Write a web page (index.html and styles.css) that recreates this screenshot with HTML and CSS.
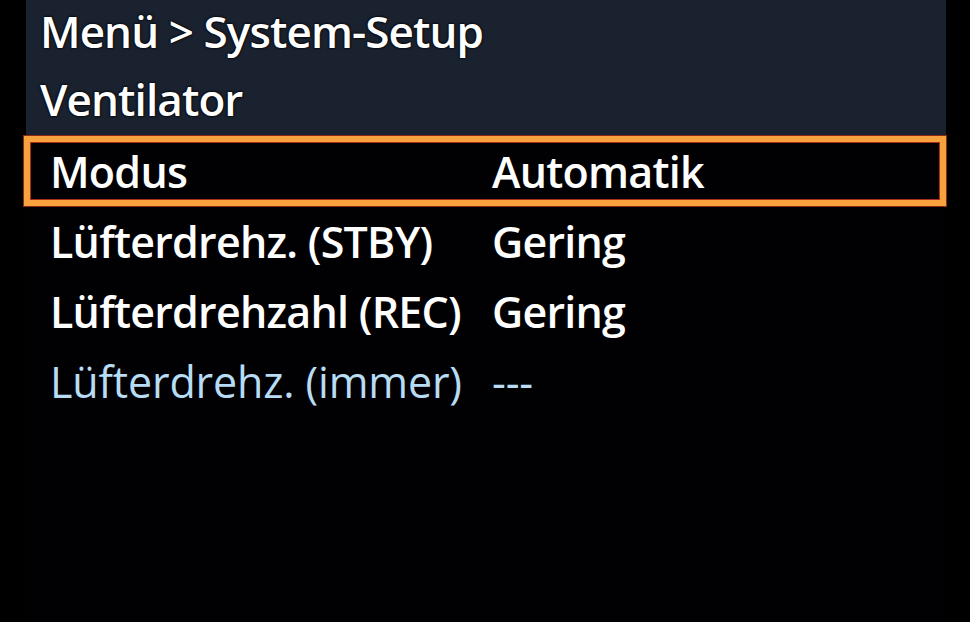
FILE: index.html
```html
<!DOCTYPE html>
<html lang="de">
<head>
  <meta charset="UTF-8">
  <meta name="viewport" content="width=device-width, initial-scale=1.0">
  <title>Menü &gt; System-Setup</title>
  <link rel="stylesheet" href="styles.css">
</head>
<body>

  <div class="screen">
    <!-- Kopfzeile -->
    <div class="header">
      <div class="path">Menü &gt; System-Setup</div>
      <div class="title">Ventilator</div>
    </div>

    <!-- Einträge -->
    <div class="list">
      <div class="row selected">
        <div class="label">Modus</div>
        <div class="value">Automatik</div>
      </div>
      <div class="row">
        <div class="label">Lüfterdrehz. (STBY)</div>
        <div class="value">Gering</div>
      </div>
      <div class="row">
        <div class="label">Lüfterdrehzahl (REC)</div>
        <div class="value">Gering</div>
      </div>
      <div class="row disabled">
        <div class="label">Lüfterdrehz. (immer)</div>
        <div class="value">---</div>
      </div>
    </div>
  </div>

</body>
</html>
```

FILE: styles.css
```css
/* Schwarzer Rahmen + Schrift */
body {
  margin: 0;
  padding: 0;
  background: #000;
  font-family: 'Open Sans', 'Noto Sans', sans-serif;
  color: #fff;
}

.screen {
  width: 920px;
  margin-left: 26px;
  height: 622px;
  background: #010103;
}

/* Kopfzeile */
.header {
  background: #1a2230;
  height: 136px;
  padding-left: 14px;
  display: flex;
  flex-direction: column;
}
.header div {
  height: 68px;
  display: flex;
  align-items: center;
  font-size: 44px;
  font-weight: 600;
  letter-spacing: -0.9px;
  text-shadow: 0 0 2px #000, 0 0 3px #000;
}
.header .path {
  margin-top: -3px;
}

/* Einträge */
.list {
  margin-left: -2px;
}
.row {
  height: 58px;
  border: 6px solid transparent;
  padding-left: 20px;
  display: flex;
  align-items: center;
  font-size: 43px;
  font-weight: 600;
  letter-spacing: -0.75px;
}
.row .label {
  width: 442px;
}
.row.selected {
  border-color: #f7a23e;
  box-shadow: inset 0 0 0 1px #a8301a, 0 0 0 1px #8a2a14;
}
.row.disabled {
  color: #b7dcf3;
  font-weight: 400;
  letter-spacing: -0.15px;
}
```
